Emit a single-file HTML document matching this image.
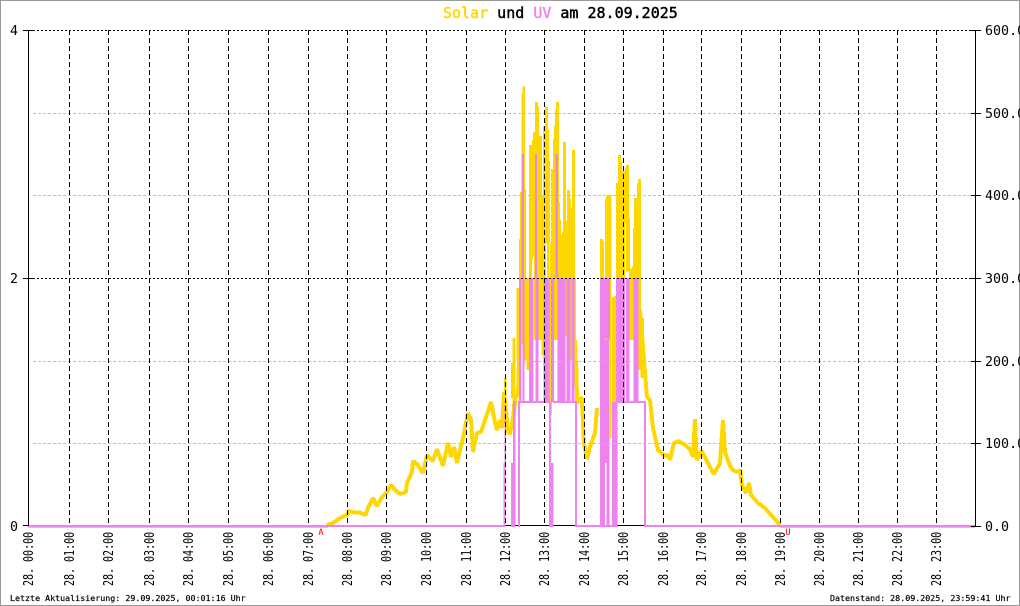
<!DOCTYPE html>
<html><head><meta charset="utf-8"><title>Solar und UV</title>
<style>
html,body{margin:0;padding:0;background:#fff;width:1020px;height:606px;overflow:hidden}
svg{display:block}
text{font-family:"DejaVu Sans Mono","Liberation Mono",monospace;white-space:pre}
.r{font-size:13.33px;fill:#000}
.t{font-size:15px;fill:#000}
.f{font-size:8.33px;fill:#000;stroke:#000;stroke-width:.2}
.x{font-size:13.33px;fill:#000}
</style></head><body>
<svg width="1020" height="606" viewBox="0 0 1020 606" xmlns="http://www.w3.org/2000/svg">
<rect width="1020" height="606" fill="#fff"/>
<rect x="0.5" y="0.5" width="1019" height="605" fill="none" stroke="#999" stroke-width="1"/>

<!-- yellow baseline -->
<rect x="28" y="527" width="300" height="1" fill="#ffd700"/>
<rect x="780" y="527" width="195" height="1" fill="#ffd700"/>

<!-- yellow curve -->
<g fill="none" stroke="#ffd700" stroke-width="4" stroke-linejoin="bevel" shape-rendering="crispEdges">
<polyline points="326.7,525 333,523 340,518 347,515 349,511 355,512.7 360,512.7 365.7,515 368,508 373,498 377,506 382,497 387,492 391,485 395,490 400,494 406,492 407,483 412,472 413,461 417,464 423,473 427,455 433,461 437,449 439,455 443,466 448,443 451,457 454,447 457,463 463,438 468,413 471,420 473,452 477,433 481,432 484,423 491,402 495,422 497,430 500,420 502,428 504,392 507,420 507,430 510,434 514,413 515,400 515,395 513,420 516,395 518,396 519,360"/>
<polyline points="575,340 577.3,403 581.7,397 584,443 587,459 590,447 595,433 597,408"/>
<polyline points="640,310 645,372 647,397 650,400 653,428 658,450 665,456 668,455 670,460 673,447 674,443 679,441 680,442 685,445 690,449 693,457 695,419 696.7,460 701.7,451 708,463 712,471 714,474 720,463 723,420 725,452 730,466 733,470 737,472 740,470 742,485 746,493 749,483 751,495 758,503 765,508 772,516 780,525"/>
</g>

<!-- yellow columns -->
<path fill="#ffd700" shape-rendering="crispEdges" transform="translate(490,80) scale(.33333)" d="
M84 625H90V790H84Z M87 477H94V800H87Z M90 336H94V800H90Z M94 42H97V790H94Z M97 20H105V790H97Z M105 327H108V700H105Z
M105 700H112V840H105Z M114 685H118V870H114Z M117 195H126V780H117Z M126 180H129V540H126Z M129 156H132V530H129Z M132 156H135V780H132Z M135 66H144V780H135Z
M144 81H147V780H144Z M147 168H156V780H147Z M154 345H160V825H154Z M159 140H165V780H159Z M165 81H168V780H165Z M171 81H174V780H171Z M168 81H171V490H168Z M174 150H177V780H174Z M177 243H180V490H177Z
M178 490H186V1005H178Z M183 267H189V780H183Z M189 177H192V780H189Z M192 138H195V780H192Z M195 90H198V780H195Z M198 66H207V780H198Z M207 366H210V780H207Z
M210 420H213V635H210Z M213 465H216V780H213Z M216 456H219V780H216Z M219 186H228V770H219Z M228 423H231V770H228Z M231 330H240V780H231Z M240 357H243V840H240Z M243 384H246V840H243Z M246 210H255V800H246Z
M330 477H339V780H330Z M339 483H342V1045H339Z M345 357H348V1000H345Z M348 348H351V780H348Z M351 345H363V780H351Z M360 345H365V1075H360Z M372 648H378V780H372Z M378 309H384V780H378Z M384 225H393V780H384Z
M393 243H396V780H393Z M396 273H405V780H396Z M405 261H408V430H405Z M408 255H417V575H408Z M417 414H420V780H417Z M420 565H426V780H420Z M426 558H432V780H426Z M429 444H432V780H429Z M432 354H441V780H432Z M441 309H444V780H441Z M444 297H453V780H444Z
"/>
<g fill="#ffd700" shape-rendering="crispEdges">
<rect x="504" y="378" width="2.7" height="32"/>
<rect x="511" y="363" width="2" height="35"/>
<rect x="512.5" y="338" width="3" height="60"/>
<rect x="516.7" y="288" width="2.3" height="72"/>
<rect x="524.7" y="278" width="2" height="82"/>
<rect x="526.7" y="278" width="2.5" height="92"/>
<rect x="538" y="278" width="3.5" height="50"/>
<rect x="541.3" y="278" width="2" height="77"/>
<rect x="549.3" y="278" width="1.7" height="124"/>
<rect x="573" y="278" width="3" height="90"/>
<rect x="576" y="368" width="2.5" height="20"/>
<rect x="603.3" y="278" width="1.7" height="124"/>
<rect x="612" y="297" width="4" height="105"/>
<rect x="629.3" y="278" width="2" height="62"/>
<rect x="638.3" y="278" width="2.4" height="92"/>
<rect x="640.7" y="318" width="3.3" height="60"/>
</g>

<!-- black axis baseline -->
<rect x="23" y="525" width="952" height="1" fill="#000"/>

<!-- pink UV -->
<g fill="#ee82ee" shape-rendering="crispEdges">
<rect x="28" y="525" width="477" height="2"/>
<rect x="503.5" y="463" width="2" height="64"/>
<rect x="504.5" y="405" width="1.5" height="58"/>
<rect x="511" y="463" width="4.3" height="64"/>
<rect x="513" y="401" width="2.3" height="62"/>
<rect x="518" y="401" width="2" height="126"/>
<rect x="520" y="401" width="29" height="2"/>
<rect x="549" y="463" width="4.3" height="64"/>
<rect x="549" y="401" width="2" height="62"/>
<rect x="553" y="401" width="23" height="2"/>
<rect x="575" y="401" width="2" height="126"/>
<rect x="575" y="525" width="30" height="2"/>
<rect x="600" y="278" width="5" height="249"/>
<rect x="605" y="340" width="1.7" height="123"/>
<rect x="606.7" y="278" width="3" height="249"/>
<rect x="612" y="402" width="5.3" height="125"/>
<rect x="617" y="401" width="28" height="2"/>
<rect x="644" y="401" width="2" height="126"/>
<rect x="644" y="525" width="331" height="2"/>
<rect x="600" y="525" width="17" height="2"/>
<rect x="511" y="525" width="4" height="2"/>
<!-- fills between level 1 and 2 -->
<rect x="519" y="278" width="2.3" height="124"/>
<rect x="522.7" y="278" width="2" height="124"/>
<rect x="529" y="278" width="4.3" height="124"/>
<rect x="535.3" y="278" width="3" height="124"/>
<rect x="543.3" y="278" width="6" height="124"/>
<rect x="551" y="278" width="3" height="124"/>
<rect x="557.3" y="278" width="8.4" height="124"/>
<rect x="566.7" y="278" width="4" height="124"/>
<rect x="571.5" y="278" width="3" height="124"/>
<rect x="600" y="278" width="3.3" height="124"/>
<rect x="605" y="278" width="5" height="60"/>
<rect x="616" y="278" width="9" height="124"/>
<rect x="626" y="278" width="3.3" height="124"/>
<rect x="633.3" y="278" width="5" height="124"/>
<rect x="521.5" y="154" width="2.5" height="124"/>
<rect x="535" y="154" width="2" height="124"/>
<rect x="555.7" y="154" width="2.3" height="124"/>
</g>

<!-- grid -->
<g shape-rendering="crispEdges" fill="none">
<path stroke="#c0c0c0" stroke-dasharray="3 2" d="M33 113.5H975M33 195.5H975M33 361.5H975M33 443.5H975"/>
<path stroke="#000" stroke-dasharray="2 2" d="M33 30.5H975M33 278.5H975"/>
<path stroke="#000" stroke-dasharray="5 3" d="M69.5 30V525M108.5 30V525M149.5 30V525M188.5 30V525M228.5 30V525M268.5 30V525M308.5 30V525M347.5 30V525M386.5 30V525M426.5 30V525M466.5 30V525M505.5 30V525M544.5 30V525M584.5 30V525M623.5 30V525M663.5 30V525M701.5 30V525M741.5 30V525M780.5 30V525M819.5 30V525M858.5 30V525M897.5 30V525M936.5 30V525"/>
<path stroke="#000" d="M28.5 30V526M975.5 30V526M23 30.5H33M971 30.5H981M23 278.5H33M971 278.5H981M971 113.5H981M971 195.5H981M971 361.5H981M971 443.5H981M971 526.5H981"/>
</g>

<!-- labels -->
<text class="r" x="10" y="35">4</text>
<text class="r" x="10" y="283">2</text>
<text class="r" x="10" y="531">0</text>
<text class="r" x="985" y="35">600.0</text>
<text class="r" x="985" y="118">500.0</text>
<text class="r" x="985" y="200">400.0</text>
<text class="r" x="985" y="283">300.0</text>
<text class="r" x="985" y="366">200.0</text>
<text class="r" x="985" y="448">100.0</text>
<text class="r" x="985" y="531">0.0</text>

<text class="t" x="443" y="18"><tspan fill="#ffd700" stroke="#ffd700" stroke-width=".45">Solar</tspan><tspan stroke="#000" stroke-width=".45"> und </tspan><tspan fill="#ee82ee" stroke="#ee82ee" stroke-width=".45">UV</tspan><tspan stroke="#000" stroke-width=".45"> am 28.09.2025</tspan></text>

<text class="f" x="10" y="601">Letzte Aktualisierung: 29.09.2025, 00:01:16 Uhr</text>
<text class="f" x="830" y="601">Datenstand: 28.09.2025, 23:59:41 Uhr</text>

<text x="321" y="535" font-size="9" fill="#f00" text-anchor="middle">A</text>
<text x="788" y="535" font-size="9" fill="#f00" text-anchor="middle">U</text>

<g>
<text class="x" transform="translate(33,586) rotate(-90) scale(.75,1)">28. 00:00</text>
<text class="x" transform="translate(74,586) rotate(-90) scale(.75,1)">28. 01:00</text>
<text class="x" transform="translate(113,586) rotate(-90) scale(.75,1)">28. 02:00</text>
<text class="x" transform="translate(154,586) rotate(-90) scale(.75,1)">28. 03:00</text>
<text class="x" transform="translate(193,586) rotate(-90) scale(.75,1)">28. 04:00</text>
<text class="x" transform="translate(233,586) rotate(-90) scale(.75,1)">28. 05:00</text>
<text class="x" transform="translate(273,586) rotate(-90) scale(.75,1)">28. 06:00</text>
<text class="x" transform="translate(313,586) rotate(-90) scale(.75,1)">28. 07:00</text>
<text class="x" transform="translate(352,586) rotate(-90) scale(.75,1)">28. 08:00</text>
<text class="x" transform="translate(391,586) rotate(-90) scale(.75,1)">28. 09:00</text>
<text class="x" transform="translate(431,586) rotate(-90) scale(.75,1)">28. 10:00</text>
<text class="x" transform="translate(471,586) rotate(-90) scale(.75,1)">28. 11:00</text>
<text class="x" transform="translate(510,586) rotate(-90) scale(.75,1)">28. 12:00</text>
<text class="x" transform="translate(549,586) rotate(-90) scale(.75,1)">28. 13:00</text>
<text class="x" transform="translate(589,586) rotate(-90) scale(.75,1)">28. 14:00</text>
<text class="x" transform="translate(628,586) rotate(-90) scale(.75,1)">28. 15:00</text>
<text class="x" transform="translate(668,586) rotate(-90) scale(.75,1)">28. 16:00</text>
<text class="x" transform="translate(706,586) rotate(-90) scale(.75,1)">28. 17:00</text>
<text class="x" transform="translate(746,586) rotate(-90) scale(.75,1)">28. 18:00</text>
<text class="x" transform="translate(785,586) rotate(-90) scale(.75,1)">28. 19:00</text>
<text class="x" transform="translate(824,586) rotate(-90) scale(.75,1)">28. 20:00</text>
<text class="x" transform="translate(863,586) rotate(-90) scale(.75,1)">28. 21:00</text>
<text class="x" transform="translate(902,586) rotate(-90) scale(.75,1)">28. 22:00</text>
<text class="x" transform="translate(941,586) rotate(-90) scale(.75,1)">28. 23:00</text>
</g>
</svg>
</body></html>
